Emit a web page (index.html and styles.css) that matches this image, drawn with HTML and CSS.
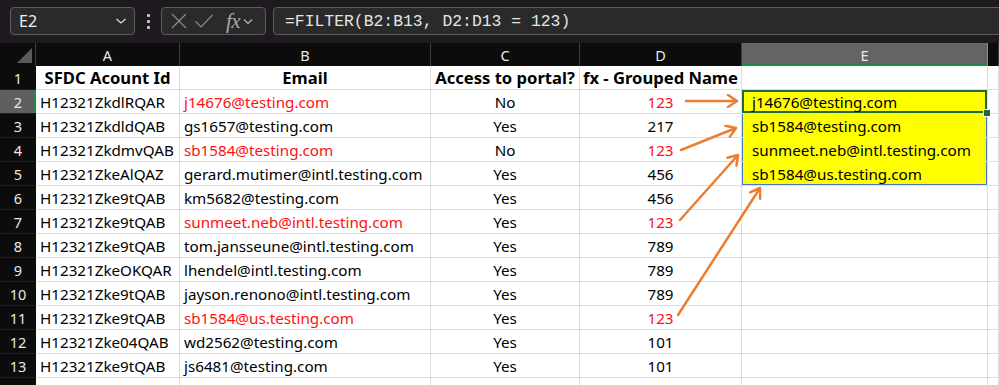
FILE: index.html
```html
<!DOCTYPE html>
<html lang="en">

<head>
  <meta charset="UTF-8">
  <title>FILTER spill</title>
  <link rel="stylesheet" href="styles.css">
</head>

<body>
  <div class="topbar">
    <div class="namebox">
      <span>E2</span>
      <svg class="chev" width="12" height="8" viewBox="0 0 12 8"><path d="M1.5 2 L6 6 L10.5 2" fill="none" stroke="#d8d8d8" stroke-width="1.3"/></svg>
    </div>
    <div class="dots"><i></i><i></i><i></i></div>
    <div class="fxbox">
      <svg width="18" height="18" viewBox="0 0 18 18"><path d="M2 2 L16 16 M16 2 L2 16" stroke="#8c8c8c" stroke-width="1.2"/></svg>
      <svg width="20" height="18" viewBox="0 0 20 18"><path d="M1.5 9.5 L7 15 L18.5 3" fill="none" stroke="#8c8c8c" stroke-width="1.2"/></svg>
      <span class="fx">fx</span>
      <svg class="chev-sm" width="10" height="7" viewBox="0 0 10 7"><path d="M1 1.5 L5 5.5 L9 1.5" fill="none" stroke="#b8b8b8" stroke-width="1.2"/></svg>
    </div>
    <div class="formula">=FILTER(B2:B13, D2:D13 = 123)</div>
  </div>

  <div class="sheet">
    <div class="corner"></div>
    <div class="colhead">A</div>
    <div class="colhead">B</div>
    <div class="colhead">C</div>
    <div class="colhead">D</div>
    <div class="colhead active">E</div>
    <div class="colhead"></div>

    <div class="rowhead">1</div>
    <div class="cell b c">SFDC Acount Id</div>
    <div class="cell b c">Email</div>
    <div class="cell b c">Access to portal?</div>
    <div class="cell b c">fx - Grouped Name</div>
    <div class="cell"></div>
    <div class="cell"></div>

    <div class="rowhead active">2</div>
    <div class="cell">H12321ZkdlRQAR</div>
    <div class="cell red">j14676@testing.com</div>
    <div class="cell c">No</div>
    <div class="cell c red">123</div>
    <div class="cell spill sel">j14676@testing.com<span class="handle"></span></div>
    <div class="cell"></div>

    <div class="rowhead">3</div>
    <div class="cell">H12321ZkdldQAB</div>
    <div class="cell">gs1657@testing.com</div>
    <div class="cell c">Yes</div>
    <div class="cell c">217</div>
    <div class="cell spill">sb1584@testing.com</div>
    <div class="cell"></div>

    <div class="rowhead">4</div>
    <div class="cell">H12321ZkdmvQAB</div>
    <div class="cell red">sb1584@testing.com</div>
    <div class="cell c">No</div>
    <div class="cell c red">123</div>
    <div class="cell spill">sunmeet.neb@intl.testing.com</div>
    <div class="cell"></div>

    <div class="rowhead">5</div>
    <div class="cell">H12321ZkeAlQAZ</div>
    <div class="cell">gerard.mutimer@intl.testing.com</div>
    <div class="cell c">Yes</div>
    <div class="cell c">456</div>
    <div class="cell spill last">sb1584@us.testing.com</div>
    <div class="cell"></div>

    <div class="rowhead">6</div>
    <div class="cell">H12321Zke9tQAB</div>
    <div class="cell">km5682@testing.com</div>
    <div class="cell c">Yes</div>
    <div class="cell c">456</div>
    <div class="cell"></div>
    <div class="cell"></div>

    <div class="rowhead">7</div>
    <div class="cell">H12321Zke9tQAB</div>
    <div class="cell red">sunmeet.neb@intl.testing.com</div>
    <div class="cell c">Yes</div>
    <div class="cell c red">123</div>
    <div class="cell"></div>
    <div class="cell"></div>

    <div class="rowhead">8</div>
    <div class="cell">H12321Zke9tQAB</div>
    <div class="cell">tom.jansseune@intl.testing.com</div>
    <div class="cell c">Yes</div>
    <div class="cell c">789</div>
    <div class="cell"></div>
    <div class="cell"></div>

    <div class="rowhead">9</div>
    <div class="cell">H12321ZkeOKQAR</div>
    <div class="cell">lhendel@intl.testing.com</div>
    <div class="cell c">Yes</div>
    <div class="cell c">789</div>
    <div class="cell"></div>
    <div class="cell"></div>

    <div class="rowhead">10</div>
    <div class="cell">H12321Zke9tQAB</div>
    <div class="cell">jayson.renono@intl.testing.com</div>
    <div class="cell c">Yes</div>
    <div class="cell c">789</div>
    <div class="cell"></div>
    <div class="cell"></div>

    <div class="rowhead">11</div>
    <div class="cell">H12321Zke9tQAB</div>
    <div class="cell red">sb1584@us.testing.com</div>
    <div class="cell c">Yes</div>
    <div class="cell c red">123</div>
    <div class="cell"></div>
    <div class="cell"></div>

    <div class="rowhead">12</div>
    <div class="cell">H12321Zke04QAB</div>
    <div class="cell">wd2562@testing.com</div>
    <div class="cell c">Yes</div>
    <div class="cell c">101</div>
    <div class="cell"></div>
    <div class="cell"></div>

    <div class="rowhead">13</div>
    <div class="cell">H12321Zke9tQAB</div>
    <div class="cell">js6481@testing.com</div>
    <div class="cell c">Yes</div>
    <div class="cell c">101</div>
    <div class="cell"></div>
    <div class="cell"></div>

    <div class="rowhead">14</div>
    <div class="cell"></div>
    <div class="cell"></div>
    <div class="cell"></div>
    <div class="cell"></div>
    <div class="cell"></div>
    <div class="cell"></div>
  </div>

  <!-- callout arrows drawn over the sheet -->
  <svg class="arrows" width="999" height="385" viewBox="0 0 999 385">
    <defs>
      <marker id="head" markerUnits="userSpaceOnUse" markerWidth="14" markerHeight="14" refX="11" refY="7" orient="auto">
        <path d="M2 1 L11 7 L2 13" fill="none" stroke="#ed7d31" stroke-width="2.5" stroke-linecap="round" stroke-linejoin="round"/>
      </marker>
    </defs>
    <g stroke="#ed7d31" stroke-width="2.5" stroke-linecap="round" fill="none" marker-end="url(#head)">
      <line x1="686" y1="101" x2="737" y2="101"/>
      <line x1="681" y1="150" x2="736" y2="128"/>
      <line x1="680" y1="220" x2="738" y2="155"/>
      <line x1="678" y1="315" x2="760" y2="188"/>
    </g>
  </svg>
</body>

</html>
```

FILE: styles.css
```css
body {
  margin: 0;
  padding: 0;
  width: 999px;
  height: 385px;
  overflow: hidden;
  background-color: #ffffff;
  font-family: 'Noto Sans', 'Liberation Sans', sans-serif;
  position: relative;
}

/* formula bar */
.topbar {
  height: 43px;
  background-color: #1f1a1f;
  display: flex;
  align-items: flex-start;
  padding-top: 7px;
  box-sizing: border-box;
}

.namebox,
.fxbox,
.formula {
  height: 28px;
  box-sizing: border-box;
  background-color: #2b2a2b;
  border: 1px solid #5e5b5e;
  border-radius: 4px;
  display: flex;
  align-items: center;
}

.namebox {
  margin-left: 10px;
  width: 125px;
  padding: 0 7px 0 8px;
  justify-content: space-between;
  color: #f0f0f0;
  font-size: 16px;
}

.dots {
  width: 26px;
  height: 28px;
  display: flex;
  flex-direction: column;
  align-items: center;
  justify-content: center;
  gap: 3px;
}

.dots i {
  width: 3px;
  height: 3px;
  background-color: #c8c8c8;
  border-radius: 1px;
}

.fxbox {
  width: 105px;
  padding: 0 4px 0 8px;
  gap: 6px;
}

.fx {
  font-family: 'Liberation Serif', serif;
  font-style: italic;
  font-size: 21px;
  color: #a9a9a9;
  margin-left: 6px;
  letter-spacing: -0.5px;
  line-height: 1;
}

.chev-sm {
  margin-left: -3px;
}

.formula {
  flex: 1;
  margin-left: 7px;
  margin-right: -6px;
  padding-left: 11px;
  font-family: 'Liberation Mono', 'DejaVu Sans Mono', monospace;
  font-size: 16.4px;
  color: #e4e4e4;
}

/* sheet grid */
.sheet {
  display: grid;
  grid-template-columns: 36px 144px 251px 149px 162px 246px 1fr;
  grid-template-rows: 23px repeat(14, 24px);
  font-size: 15.2px;
}

.corner {
  background-color: #0c0c0c;
  border-right: 1px solid #3c3c3c;
  position: relative;
}

.corner::after {
  content: '';
  position: absolute;
  right: 3px;
  bottom: 3px;
  border-style: solid;
  border-width: 0 0 15px 15px;
  border-color: transparent transparent #5a5a5a transparent;
}

.colhead {
  background-color: #0c0c0c;
  color: #e8e8e8;
  font-size: 14.5px;
  display: flex;
  align-items: center;
  justify-content: center;
  border-right: 1px solid #3c3c3c;
}

.colhead.active {
  background-color: #646464;
  border-right-color: #8a8a8a;
  box-shadow: inset 0 -2px 0 #1f8a4c;
}

.rowhead {
  background-color: #0c0c0c;
  color: #e8e8e8;
  font-size: 14.5px;
  display: flex;
  align-items: center;
  justify-content: center;
  border-bottom: 1px solid #1e1e1e;
}

.rowhead.active {
  background-color: #5f5f5f;
  box-shadow: inset -2px 0 0 #1f8a4c;
}

.cell {
  border-right: 1px solid #dcdcdc;
  border-bottom: 1px solid #dcdcdc;
  padding: 0 4px;
  display: flex;
  align-items: center;
  white-space: nowrap;
  overflow: hidden;
  color: #000000;
}

.cell.c {
  justify-content: center;
}

.cell.b {
  font-weight: 700;
  font-size: 16.6px;
  padding: 0 2px;
}

.cell.red {
  color: #ff1010;
}

/* spilled FILTER result */
.cell.spill {
  background-color: #ffff00;
  border-color: #ffff00;
  padding-left: 10px;
  box-shadow: inset 1px 0 0 #4a78c8, inset -1px 0 0 #4a78c8;
  overflow: visible;
  position: relative;
}

.cell.spill.last {
  box-shadow: inset 1px 0 0 #4a78c8, inset -1px 0 0 #4a78c8, inset 0 -1px 0 #4a78c8;
}

.cell.spill.sel {
  box-shadow: inset 0 0 0 2px #1e6b41;
}

.handle {
  position: absolute;
  right: -4px;
  bottom: -4px;
  width: 6px;
  height: 6px;
  background-color: #1e6b41;
  border: 1px solid #ffffff;
  z-index: 2;
}

.arrows {
  position: absolute;
  left: 0;
  top: 0;
  pointer-events: none;
}
```
